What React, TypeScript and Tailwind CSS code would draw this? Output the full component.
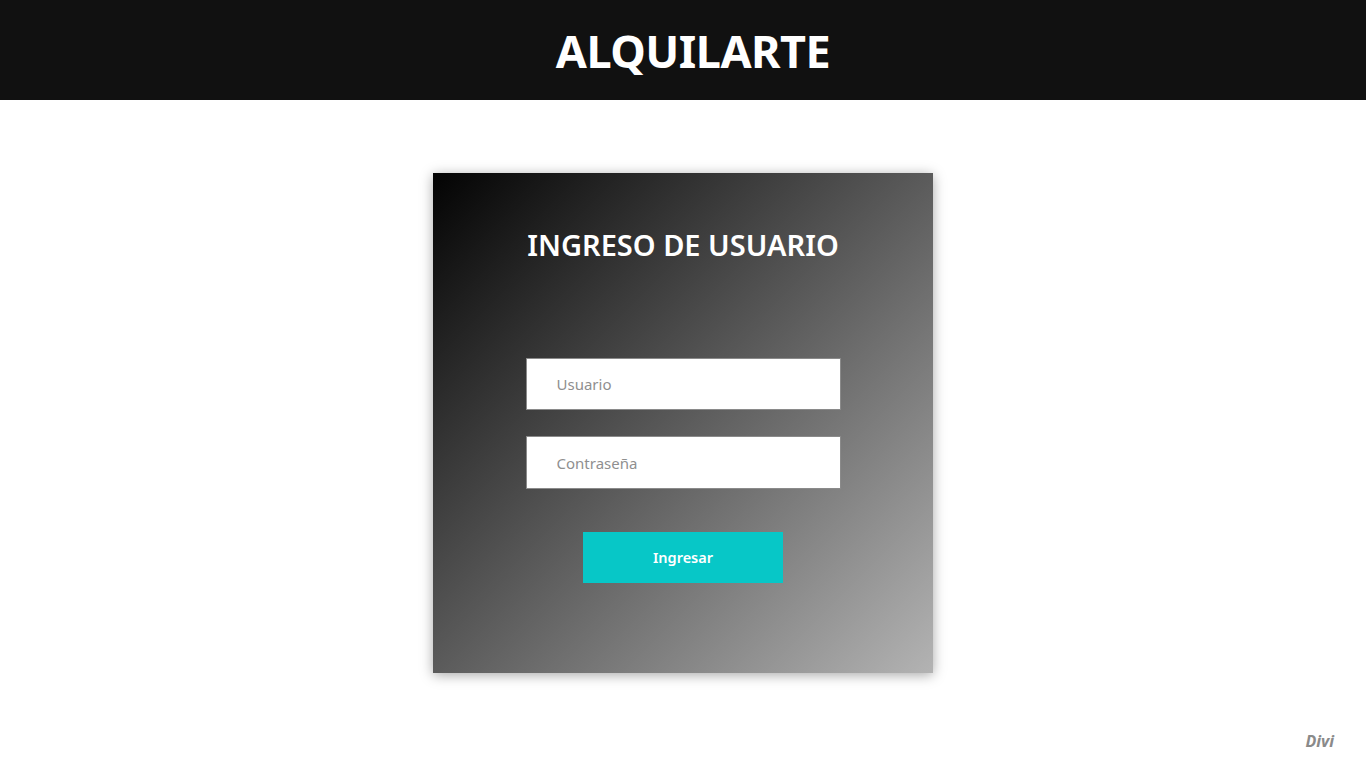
import React from 'react'

const App = () => {
    return (
        <div className="min-h-screen bg-white font-['Noto_Sans',sans-serif] relative">
            <header className="h-[100px] bg-[#111111] flex items-center justify-center pl-5">
                <h1 className="text-white text-[45px] font-bold tracking-[-0.5px] leading-none">ALQUILARTE</h1>
            </header>
            <main className="flex justify-center pt-[73px]">
                <div className="w-[500px] h-[500px] bg-[linear-gradient(to_bottom_right,#030303,#b3b3b3)] shadow-[0_2px_12px_rgba(0,0,0,0.35)] flex flex-col items-center">
                    <h2 className="text-white text-[29px] font-semibold leading-none mt-[57px]">INGRESO DE USUARIO</h2>
                    <input
                        type="text"
                        placeholder="Usuario"
                        className="mt-[99px] w-[315px] h-[52px] bg-white border border-[#8a8a8a] px-[30px] text-[15px] text-[#444] placeholder:text-[#8f8f8f] outline-none"
                    />
                    <input
                        type="password"
                        placeholder="Contraseña"
                        className="mt-[26px] w-[315px] h-[53px] bg-white border border-[#8a8a8a] px-[30px] text-[15px] text-[#444] placeholder:text-[#8f8f8f] outline-none"
                    />
                    <button className="mt-[43px] w-[200px] h-[51px] bg-[#07c7c7] text-white text-[14.5px] font-semibold">Ingresar</button>
                </div>
            </main>
            <div className="absolute right-[32px] top-[729px] text-[#8a8a8a] text-[16px] font-bold italic">Divi</div>
        </div>
    )
}

export default App
